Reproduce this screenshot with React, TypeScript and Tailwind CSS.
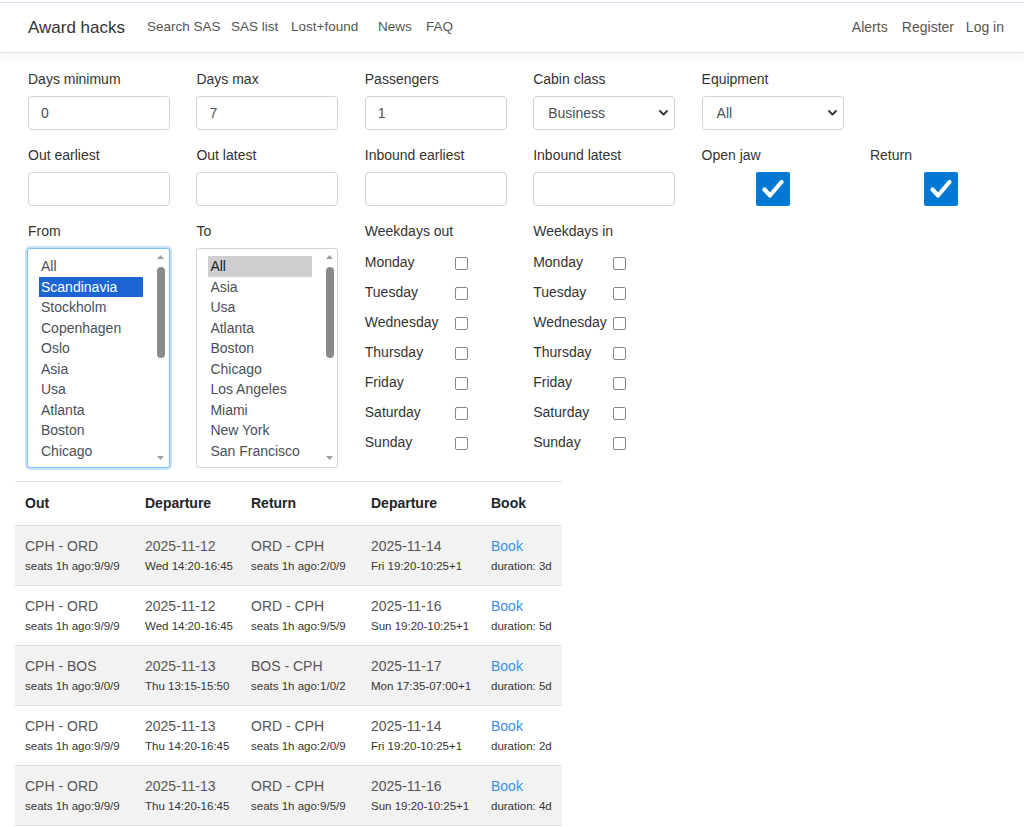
import React from 'react';

const weekdays = ['Monday', 'Tuesday', 'Wednesday', 'Thursday', 'Friday', 'Saturday', 'Sunday'];

const fromItems = ['All', 'Scandinavia', 'Stockholm', 'Copenhagen', 'Oslo', 'Asia', 'Usa', 'Atlanta', 'Boston', 'Chicago'];
const toItems = ['All', 'Asia', 'Usa', 'Atlanta', 'Boston', 'Chicago', 'Los Angeles', 'Miami', 'New York', 'San Francisco'];

type Row = {
  out: string;
  outSeats: string;
  dep: string;
  depTime: string;
  ret: string;
  retSeats: string;
  dep2: string;
  dep2Time: string;
  dur: string;
};

const rows: Row[] = [
  { out: 'CPH - ORD', outSeats: 'seats 1h ago:9/9/9', dep: '2025-11-12', depTime: 'Wed 14:20-16:45', ret: 'ORD - CPH', retSeats: 'seats 1h ago:2/0/9', dep2: '2025-11-14', dep2Time: 'Fri 19:20-10:25+1', dur: 'duration: 3d' },
  { out: 'CPH - ORD', outSeats: 'seats 1h ago:9/9/9', dep: '2025-11-12', depTime: 'Wed 14:20-16:45', ret: 'ORD - CPH', retSeats: 'seats 1h ago:9/5/9', dep2: '2025-11-16', dep2Time: 'Sun 19:20-10:25+1', dur: 'duration: 5d' },
  { out: 'CPH - BOS', outSeats: 'seats 1h ago:9/0/9', dep: '2025-11-13', depTime: 'Thu 13:15-15:50', ret: 'BOS - CPH', retSeats: 'seats 1h ago:1/0/2', dep2: '2025-11-17', dep2Time: 'Mon 17:35-07:00+1', dur: 'duration: 5d' },
  { out: 'CPH - ORD', outSeats: 'seats 1h ago:9/9/9', dep: '2025-11-13', depTime: 'Thu 14:20-16:45', ret: 'ORD - CPH', retSeats: 'seats 1h ago:2/0/9', dep2: '2025-11-14', dep2Time: 'Fri 19:20-10:25+1', dur: 'duration: 2d' },
  { out: 'CPH - ORD', outSeats: 'seats 1h ago:9/9/9', dep: '2025-11-13', depTime: 'Thu 14:20-16:45', ret: 'ORD - CPH', retSeats: 'seats 1h ago:9/5/9', dep2: '2025-11-16', dep2Time: 'Sun 19:20-10:25+1', dur: 'duration: 4d' },
];

function Label({ children }: { children: React.ReactNode }) {
  return <div className="mb-[6px] h-[21px] text-[14px] leading-[21px] text-[#333]">{children}</div>;
}

function TextInput({ value }: { value?: string }) {
  return (
    <input
      readOnly
      value={value ?? ''}
      className="h-[34px] w-[142px] rounded-[4px] border border-solid border-[#ced4da] bg-white pl-[12px] text-[14px] text-[#495057] outline-none"
    />
  );
}

function Chevron() {
  return (
    <svg width="9" height="6" viewBox="0 0 9 6" fill="none">
      <path d="M1 1l3.5 3.5L8 1" stroke="#333" strokeWidth="1.8" strokeLinecap="round" strokeLinejoin="round" />
    </svg>
  );
}

function Select({ value }: { value: string }) {
  return (
    <div className="flex h-[34px] w-[142px] items-center justify-between rounded-[4px] border border-[#ced4da] bg-white pl-[14px] pr-[6px] text-[14px] text-[#495057]">
      <span>{value}</span>
      <Chevron />
    </div>
  );
}

function BigCheck() {
  return (
    <div className="flex w-[142px] justify-center">
      <div className="flex h-[34px] w-[34px] items-center justify-center rounded-[2px] bg-[#0078d4]">
        <svg width="34" height="34" viewBox="0 0 34 34" fill="none">
          <path d="M8.5 17.5l5.5 6L25.5 10" stroke="#fff" strokeWidth="4.2" strokeLinecap="round" strokeLinejoin="round" />
        </svg>
      </div>
    </div>
  );
}

function SmallBox() {
  return <div className="mt-[3px] h-[13px] w-[13px] rounded-[2px] border border-[#858585] bg-white" />;
}

function ListBox({ items, focused }: { items: string[]; focused: boolean }) {
  return (
    <div
      className={
        focused
          ? 'flex h-[220px] w-[143px] rounded-[3px] border border-[#80bdff] bg-white shadow-[0_0_0_2px_rgba(0,123,255,0.22)]'
          : 'flex h-[220px] w-[142px] rounded-[3px] border border-[#ced4da] bg-white'
      }
    >
      <div className="ml-[11px] w-[104px] overflow-hidden pt-[7px]">
        {items.map((it, i) => {
          let cls = 'h-[20.5px] whitespace-nowrap pl-[2px] text-[14px] leading-[20.5px] text-[#495057]';
          if (i === 1 && focused) cls = 'h-[20.5px] whitespace-nowrap bg-[#1a65d3] pl-[2px] text-[14px] leading-[20.5px] text-white';
          if (i === 0 && !focused) cls = 'h-[20.5px] whitespace-nowrap bg-[#cecece] pl-[2px] text-[14px] leading-[20.5px] text-[#222]';
          return (
            <div key={it} className={cls}>
              {it}
            </div>
          );
        })}
      </div>
      <div className="ml-[13px] flex w-[9px] flex-col items-center">
        <svg className="mt-[5px]" width="9" height="6" viewBox="0 0 9 6">
          <path d="M4.5 1L8 5H1z" fill="#a0a0a0" />
        </svg>
        <div className="mt-[7px] h-[91px] w-[8px] rounded-full bg-[#8a8a8a]" />
        <div className="flex-1" />
        <svg className="mb-[6px]" width="9" height="6" viewBox="0 0 9 6">
          <path d="M1 1h7L4.5 5z" fill="#a0a0a0" />
        </svg>
      </div>
    </div>
  );
}

function Weekdays({ title, labelW }: { title: string; labelW: string }) {
  return (
    <div className="flex flex-col">
      <div className="h-[21px] text-[14px] leading-[21px] text-[#333]">{title}</div>
      <div className="mt-[5px] flex flex-col">
        {weekdays.map((d) => (
          <div key={d} className="flex h-[30px] items-center">
            <div className={labelW + ' text-[14px] text-[#333]'}>{d}</div>
            <SmallBox />
          </div>
        ))}
      </div>
    </div>
  );
}

function Cell({ main, sub, link }: { main: string; sub: string; link?: boolean }) {
  return (
    <div className="flex flex-col pl-[10px] pt-[10px]">
      <div className={link ? 'h-[21px] text-[14px] leading-[21px] text-[#3b8ee6]' : 'h-[21px] whitespace-nowrap text-[14px] leading-[21px] text-[#555]'}>{main}</div>
      <div className="h-[18px] whitespace-nowrap text-[11.5px] leading-[18px] text-[#333]">{sub}</div>
    </div>
  );
}

export default function App() {
  return (
    <div className="min-h-[827px] bg-white [font-family:'Liberation_Sans',Arial,sans-serif]">
      <div className="h-[2px] bg-white" />
      <nav className="flex h-[51px] items-center border-t border-b border-t-[#dedef2] border-b-[#e4e4e4] bg-white pl-[28px] pr-[20px] shadow-[0_4px_10px_rgba(0,0,0,0.05)]">
        <div className="text-[17px] text-[#333]">Award hacks</div>
        <div className="ml-[22px] flex text-[13.5px] text-[#555]">
          <span className="w-[84px]">Search SAS</span>
          <span className="w-[60px]">SAS list</span>
          <span className="w-[87px]">Lost+found</span>
          <span className="w-[48px]">News</span>
          <span>FAQ</span>
        </div>
        <div className="ml-auto flex text-[14px] text-[#555]">
          <span className="w-[50px]">Alerts</span>
          <span className="w-[64px]">Register</span>
          <span>Log in</span>
        </div>
      </nav>

      <main className="px-[15px]">
        <div className="grid grid-cols-[repeat(6,168.4px)] gap-y-[15px] px-[13px] pt-[16px]">
          <div>
            <Label>Days minimum</Label>
            <TextInput value="0" />
          </div>
          <div>
            <Label>Days max</Label>
            <TextInput value="7" />
          </div>
          <div>
            <Label>Passengers</Label>
            <TextInput value="1" />
          </div>
          <div>
            <Label>Cabin class</Label>
            <Select value="Business" />
          </div>
          <div>
            <Label>Equipment</Label>
            <Select value="All" />
          </div>
          <div />

          <div>
            <Label>Out earliest</Label>
            <TextInput />
          </div>
          <div>
            <Label>Out latest</Label>
            <TextInput />
          </div>
          <div>
            <Label>Inbound earliest</Label>
            <TextInput />
          </div>
          <div>
            <Label>Inbound latest</Label>
            <TextInput />
          </div>
          <div>
            <Label>Open jaw</Label>
            <BigCheck />
          </div>
          <div>
            <Label>Return</Label>
            <BigCheck />
          </div>

          <div className="-ml-[1px]">
            <Label>
              <span className="pl-[1px]">From</span>
            </Label>
            <ListBox items={fromItems} focused />
          </div>
          <div>
            <Label>To</Label>
            <ListBox items={toItems} focused={false} />
          </div>
          <Weekdays title="Weekdays out" labelW="w-[90px]" />
          <Weekdays title="Weekdays in" labelW="w-[80px]" />
        </div>

        <div className="mt-[13px] w-[547px] border-t border-[#dee2e6]">
          <div className="grid h-[44px] grid-cols-[120px_106px_120px_120px_81px] items-center border-b border-[#dee2e6] text-[14px] font-bold text-[#212529]">
            <div className="pl-[10px]">Out</div>
            <div className="pl-[10px]">Departure</div>
            <div className="pl-[10px]">Return</div>
            <div className="pl-[10px]">Departure</div>
            <div className="pl-[10px]">Book</div>
          </div>
          {rows.map((r, i) => (
            <div
              key={i}
              className={
                i % 2 === 0
                  ? 'grid h-[60px] grid-cols-[120px_106px_120px_120px_81px] border-b border-[#dee2e6] bg-[#f2f2f2]'
                  : 'grid h-[60px] grid-cols-[120px_106px_120px_120px_81px] border-b border-[#dee2e6] bg-white'
              }
            >
              <Cell main={r.out} sub={r.outSeats} />
              <Cell main={r.dep} sub={r.depTime} />
              <Cell main={r.ret} sub={r.retSeats} />
              <Cell main={r.dep2} sub={r.dep2Time} />
              <Cell main="Book" sub={r.dur} link />
            </div>
          ))}
        </div>
      </main>
    </div>
  );
}
